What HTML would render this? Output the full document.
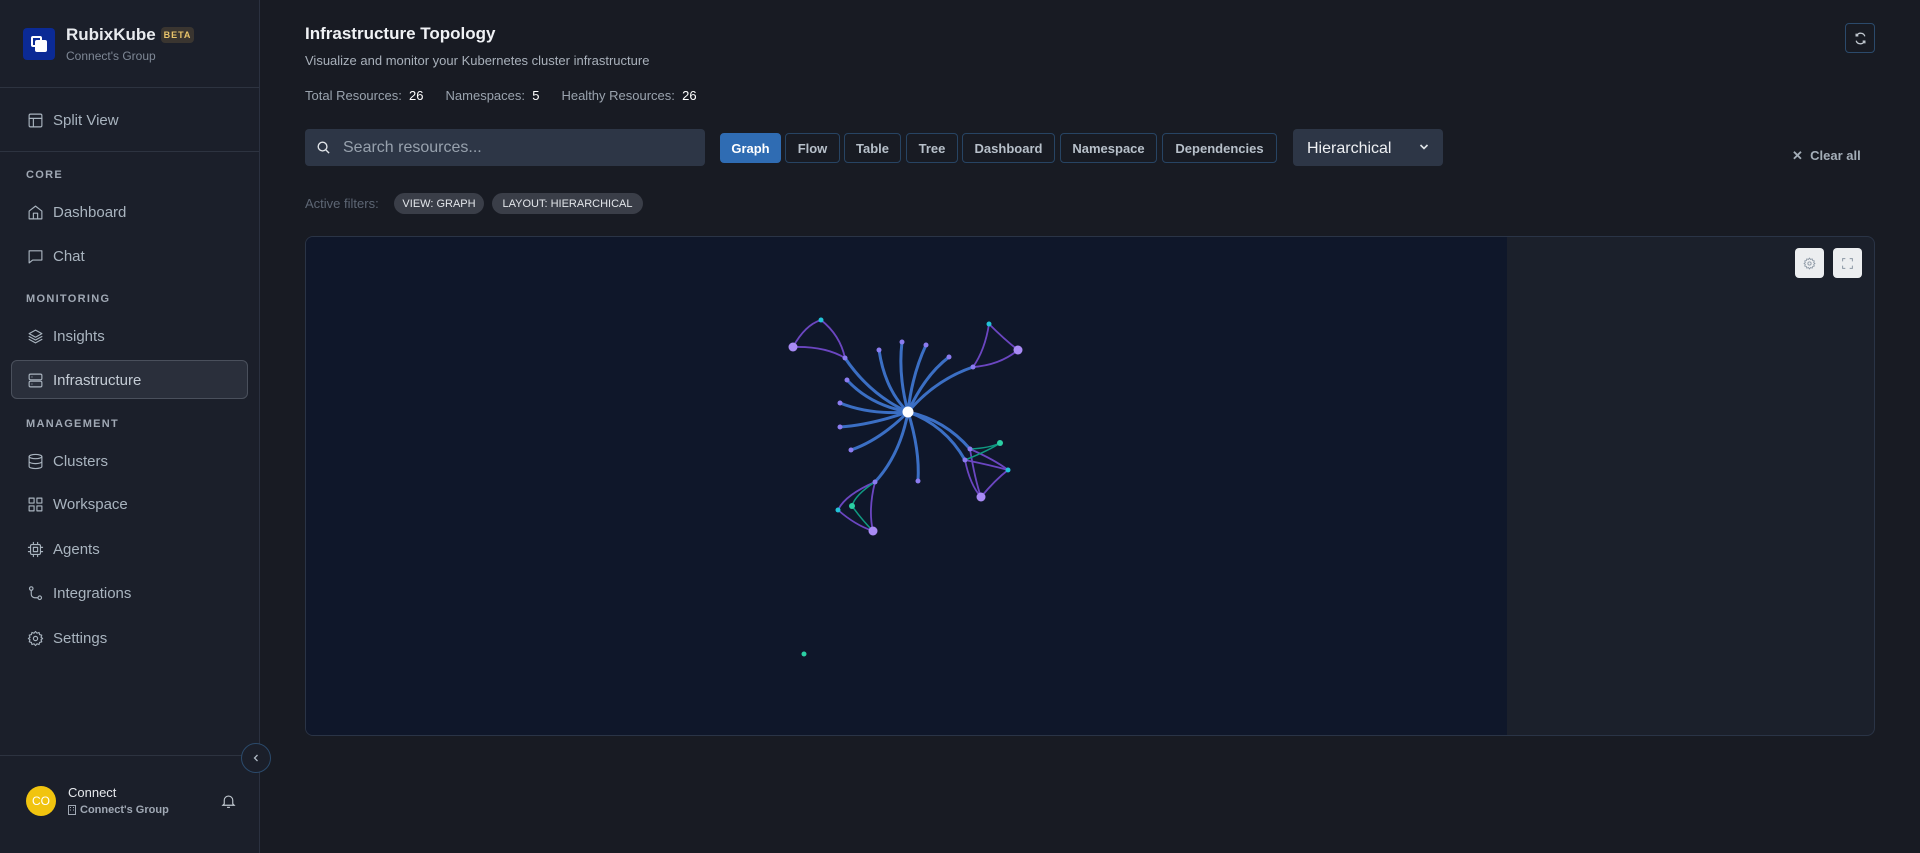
<!DOCTYPE html>
<html><head><meta charset="utf-8"><style>
*{box-sizing:border-box;margin:0;padding:0}
body{width:1920px;height:853px;background:#181b23;font-family:"Liberation Sans",sans-serif;position:relative;overflow:hidden;color:#e5e7eb}
.a{position:absolute}
.sb{left:0;top:0;width:260px;height:853px;background:#1b1f2a;border-right:1px solid #2b3140}
.hr{height:1px;background:#2d3340;left:0;width:259px}
.nav{left:27px;font-size:15px;color:#a9b4bf;display:flex;align-items:center;gap:9px;height:20px}
.nav svg{width:17px;height:17px;fill:none;stroke:#a9b4bf;stroke-width:1.6;stroke-linecap:round;stroke-linejoin:round}
.sec{left:26px;font-size:11px;letter-spacing:1.3px;color:#a0a8b4;font-weight:bold}
.btn{top:133px;height:30px;border:1px solid #274463;border-radius:4px;font-size:13px;color:#b7c0ca;display:flex;align-items:center;justify-content:center;font-weight:bold}
.chip{top:193px;height:21px;border-radius:11px;background:#3a3e48;color:#e3e6ea;font-size:11px;display:flex;align-items:center;justify-content:center;white-space:nowrap}
</style></head><body>
<div class="a sb"></div>
<div class="a" style="left:23px;top:28px;width:32px;height:32px;background:#0b2a95;border-radius:4px"></div>
<div class="a" style="left:31px;top:36px;width:11px;height:11px;border:2.5px solid #fff;border-radius:2px"></div>
<div class="a" style="left:35px;top:40px;width:12px;height:12px;background:#fff;border-radius:2px"></div>
<div class="a" style="left:66px;top:25px;font-size:17px;font-weight:bold;color:#e8eaee">RubixKube</div>
<div class="a" style="left:161px;top:27px;width:33px;height:16px;background:#3a3530;border-radius:4px;color:#e9c46a;font-size:9px;font-weight:bold;letter-spacing:1px;display:flex;align-items:center;justify-content:center">BETA</div>
<div class="a" style="left:66px;top:49px;font-size:12px;color:#7f8896">Connect's Group</div>
<div class="a hr" style="top:87px"></div>
<div class="a nav" style="top:110px"><svg viewBox="0 0 24 24"><rect x="3" y="3" width="18" height="18" rx="2"/><path d="M3 9h18M9 9v12"/></svg>Split View</div>
<div class="a hr" style="top:151px"></div>
<div class="a sec" style="top:169px">CORE</div>
<div class="a nav" style="top:202px"><svg viewBox="0 0 24 24"><path d="M3 10l9-7 9 7v11H3z"/><path d="M9 21v-8h6v8"/></svg>Dashboard</div>
<div class="a nav" style="top:246px"><svg viewBox="0 0 24 24"><path d="M3 4h18v13H8l-5 4z"/></svg>Chat</div>
<div class="a sec" style="top:293px">MONITORING</div>
<div class="a nav" style="top:326px"><svg viewBox="0 0 24 24"><path d="M12 3l9 5-9 5-9-5z"/><path d="M3 12l9 5 9-5M3 16l9 5 9-5"/></svg>Insights</div>
<div class="a" style="left:11px;top:360px;width:237px;height:39px;background:#2a2f3b;border:1px solid #4a505c;border-radius:6px"></div>
<div class="a nav" style="top:370px;color:#c4ccd5"><svg viewBox="0 0 24 24"><rect x="3" y="3" width="18" height="8" rx="2"/><rect x="3" y="13" width="18" height="8" rx="2"/><path d="M7 7h.01M7 17h.01"/></svg>Infrastructure</div>
<div class="a sec" style="top:418px">MANAGEMENT</div>
<div class="a nav" style="top:451px"><svg viewBox="0 0 24 24"><ellipse cx="12" cy="5" rx="9" ry="3"/><path d="M3 5v14c0 1.7 4 3 9 3s9-1.3 9-3V5M3 12c0 1.7 4 3 9 3s9-1.3 9-3"/></svg>Clusters</div>
<div class="a nav" style="top:494px"><svg viewBox="0 0 24 24"><rect x="3" y="3" width="7" height="7"/><rect x="14" y="3" width="7" height="7"/><rect x="3" y="14" width="7" height="7"/><rect x="14" y="14" width="7" height="7"/></svg>Workspace</div>
<div class="a nav" style="top:539px"><svg viewBox="0 0 24 24"><rect x="5" y="5" width="14" height="14" rx="2"/><rect x="9" y="9" width="6" height="6"/><path d="M9 2v3M15 2v3M9 19v3M15 19v3M2 9h3M2 15h3M19 9h3M19 15h3"/></svg>Agents</div>
<div class="a nav" style="top:583px"><svg viewBox="0 0 24 24"><circle cx="6" cy="5" r="2.5"/><circle cx="18" cy="18" r="2.5"/><path d="M6 8v5a5 5 0 0 0 5 5h4.5"/></svg>Integrations</div>
<div class="a nav" style="top:628px"><svg viewBox="0 0 24 24"><circle cx="12" cy="12" r="3"/><path d="M12 2l2 2.5 3-1 .8 3 3 .8-1 3L22 12l-2.2 1.7 1 3-3 .8-.8 3-3-1L12 22l-2-2.5-3 1-.8-3-3-.8 1-3L2 12l2.2-1.7-1-3 3-.8.8-3 3 1z"/></svg>Settings</div>
<div class="a hr" style="top:755px"></div>
<div class="a" style="left:241px;top:743px;width:30px;height:30px;border-radius:50%;border:1px solid #2b4a6b;background:#1b1f2a;display:flex;align-items:center;justify-content:center"><svg width="10" height="10" viewBox="0 0 10 10"><path d="M6.5 2L3.5 5l3 3" stroke="#b0bac5" stroke-width="1.3" fill="none"/></svg></div>
<div class="a" style="left:26px;top:786px;width:30px;height:30px;border-radius:50%;background:#f1c40f;color:#fff;font-size:12px;display:flex;align-items:center;justify-content:center">CO</div>
<div class="a" style="left:68px;top:785px;font-size:13px;color:#e6e8ec">Connect</div>
<div class="a" style="left:68px;top:804px;font-size:11px;color:#a0a8b4;font-weight:bold;display:flex;align-items:center;gap:4px"><svg width="8" height="10" viewBox="0 0 8 10"><rect x="0.5" y="0.5" width="7" height="9" fill="none" stroke="#a0a8b4"/><path d="M2 2.5h1M5 2.5h1M2 5h1M5 5h1" stroke="#a0a8b4"/></svg>Connect's Group</div>
<svg class="a" style="left:220px;top:792px" width="17" height="18" viewBox="0 0 24 24" fill="none" stroke="#c0c7cf" stroke-width="1.6"><path d="M6 16V11a6 6 0 0 1 12 0v5l2 2H4z"/><path d="M10 21h4"/></svg>

<div class="a" style="left:305px;top:24px;font-size:17px;font-weight:bold;color:#f0f2f5">Infrastructure Topology</div>
<div class="a" style="left:305px;top:53px;font-size:13px;color:#a9b1bb">Visualize and monitor your Kubernetes cluster infrastructure</div>
<div class="a" style="left:305px;top:88px;font-size:13px;color:#9aa3ae">Total Resources: <span style="color:#fff">&nbsp;26</span><span style="margin-left:22px">Namespaces: <span style="color:#fff">&nbsp;5</span></span><span style="margin-left:22px">Healthy Resources: <span style="color:#fff">&nbsp;26</span></span></div>
<div class="a" style="left:1845px;top:23px;width:30px;height:30px;border:1px solid #2b4a6b;border-radius:4px;display:flex;align-items:center;justify-content:center"><svg width="13" height="13" viewBox="0 0 24 24" fill="none" stroke="#c0c7cf" stroke-width="2.4"><path d="M20 8a8 8 0 0 0-15-1M4 16a8 8 0 0 0 15 1"/><path d="M4 3v4h4M20 21v-4h-4"/></svg></div>

<div class="a" style="left:305px;top:129px;width:400px;height:37px;background:#2d3646;border-radius:4px"></div>
<svg class="a" style="left:316px;top:140px" width="15" height="15" viewBox="0 0 24 24" fill="none" stroke="#e0e4e8" stroke-width="2.2"><circle cx="10.5" cy="10.5" r="7"/><path d="M16 16l5 5"/></svg>
<div class="a" style="left:343px;top:139px;font-size:16px;color:#97a1ad">Search resources...</div>
<div class="a btn" style="left:720px;width:61px;background:#2f6cb3;border-color:#2f6cb3;color:#fff">Graph</div>
<div class="a btn" style="left:785px;width:55px">Flow</div>
<div class="a btn" style="left:844px;width:57px">Table</div>
<div class="a btn" style="left:906px;width:52px">Tree</div>
<div class="a btn" style="left:962px;width:93px">Dashboard</div>
<div class="a btn" style="left:1060px;width:97px">Namespace</div>
<div class="a btn" style="left:1162px;width:115px">Dependencies</div>
<div class="a" style="left:1293px;top:129px;width:150px;height:37px;background:#2d3646;border-radius:4px;font-size:16px;color:#eef0f3;padding:11px 0 0 14px">Hierarchical</div>
<svg class="a" style="left:1419px;top:143px" width="10" height="8" viewBox="0 0 10 8" fill="none" stroke="#e0e4e8" stroke-width="1.6"><path d="M1.5 2l3.5 3.5L8.5 2"/></svg>
<div class="a" style="left:1792px;top:148px;font-size:13px;color:#a4aeb8;font-weight:bold">✕&nbsp; Clear all</div>

<div class="a" style="left:305px;top:196px;font-size:13px;color:#5d6674">Active filters:</div>
<div class="a chip" style="left:394px;width:90px">VIEW: GRAPH</div>
<div class="a chip" style="left:492px;width:151px">LAYOUT: HIERARCHICAL</div>

<div class="a" style="left:305px;top:236px;width:1570px;height:500px;border:1px solid #2a3446;border-radius:8px;background:#1b202b;overflow:hidden">
<div class="a" style="left:0;top:0;width:1201px;height:500px;background:#0f172a"></div>
</div>
<div class="a" style="left:1795px;top:248px;width:29px;height:30px;background:#eceef0;border-radius:4px;display:flex;align-items:center;justify-content:center"><svg width="13" height="13" viewBox="0 0 24 24" fill="none" stroke="#8a96a3" stroke-width="1.6"><circle cx="12" cy="12" r="3"/><path d="M12 2l2 2.5 3-1 .8 3 3 .8-1 3L22 12l-2.2 1.7 1 3-3 .8-.8 3-3-1L12 22l-2-2.5-3 1-.8-3-3-.8 1-3L2 12l2.2-1.7-1-3 3-.8.8-3 3 1z"/></svg></div>
<div class="a" style="left:1833px;top:248px;width:29px;height:30px;background:#eceef0;border-radius:4px;display:flex;align-items:center;justify-content:center"><svg width="13" height="13" viewBox="0 0 24 24" fill="none" stroke="#8a96a3" stroke-width="1.8"><path d="M3 8V3h5M16 3h5v5M21 16v5h-5M8 21H3v-5"/></svg></div>

<svg class="a" style="left:0;top:0" width="1920" height="853" viewBox="0 0 1920 853">
<g fill="none" stroke="#3b6fc4" stroke-width="3" stroke-linecap="round">
<path d="M908 412Q870 395 845 358"/><path d="M908 412Q885 390 879 350"/><path d="M908 412Q898 375 902 342"/><path d="M908 412Q912 375 926 345"/><path d="M908 412Q925 375 949 357"/><path d="M908 412Q935 380 973 367"/><path d="M908 412Q870 405 847 380"/><path d="M908 412Q870 415 840 403"/><path d="M908 412Q870 425 840 427"/><path d="M908 412Q880 440 851 450"/><path d="M908 412Q920 450 918 481"/><path d="M908 412Q900 455 875 482"/><path d="M908 412Q945 420 970 449"/><path d="M908 412Q945 425 965 460"/>
</g>
<g fill="none" stroke="#6b46c1" stroke-width="1.8">
<path d="M793 347Q805 325 821 320"/><path d="M821 320Q840 335 845 358"/><path d="M793 347Q825 346 845 358"/>
<path d="M989 324Q985 350 973 367"/><path d="M989 324Q1005 340 1018 350"/><path d="M973 367Q1000 365 1018 350"/>
<path d="M965 460Q970 485 981 497"/><path d="M970 449Q975 480 981 497"/><path d="M981 497Q995 480 1008 470"/><path d="M965 460Q990 465 1008 470"/><path d="M970 449Q995 460 1008 470"/>
<path d="M875 482Q845 495 838 510"/><path d="M838 510Q855 525 873 531"/><path d="M875 482Q868 510 873 531"/>
</g>
<g fill="none" stroke="#109a82" stroke-width="1.5">
<path d="M970 449Q990 448 1000 443"/><path d="M965 460Q990 450 1000 443"/><path d="M875 482Q855 495 852 506"/><path d="M852 506Q862 520 873 531"/>
</g>
<g fill="#8b7cf0">
<circle cx="845" cy="358" r="2.5"/><circle cx="879" cy="350" r="2.5"/><circle cx="902" cy="342" r="2.5"/><circle cx="926" cy="345" r="2.5"/><circle cx="949" cy="357" r="2.5"/><circle cx="973" cy="367" r="2.5"/><circle cx="847" cy="380" r="2.5"/><circle cx="840" cy="403" r="2.5"/><circle cx="840" cy="427" r="2.5"/><circle cx="851" cy="450" r="2.5"/><circle cx="918" cy="481" r="2.5"/><circle cx="875" cy="482" r="2.5"/><circle cx="970" cy="449" r="2.5"/><circle cx="965" cy="460" r="2.5"/>
</g>
<g fill="#a98bf5"><circle cx="793" cy="347" r="4.5"/><circle cx="1018" cy="350" r="4.5"/><circle cx="981" cy="497" r="4.5"/><circle cx="873" cy="531" r="4.5"/></g>
<g fill="#22c3d8"><circle cx="821" cy="320" r="2.5"/><circle cx="989" cy="324" r="2.5"/><circle cx="1008" cy="470" r="2.5"/><circle cx="838" cy="510" r="2.5"/></g>
<g fill="#2bd0a4"><circle cx="1000" cy="443" r="3"/><circle cx="852" cy="506" r="3"/><circle cx="804" cy="654" r="2.5"/></g>
<circle cx="908" cy="412" r="5.5" fill="#fff"/>
</svg>
</body></html>
